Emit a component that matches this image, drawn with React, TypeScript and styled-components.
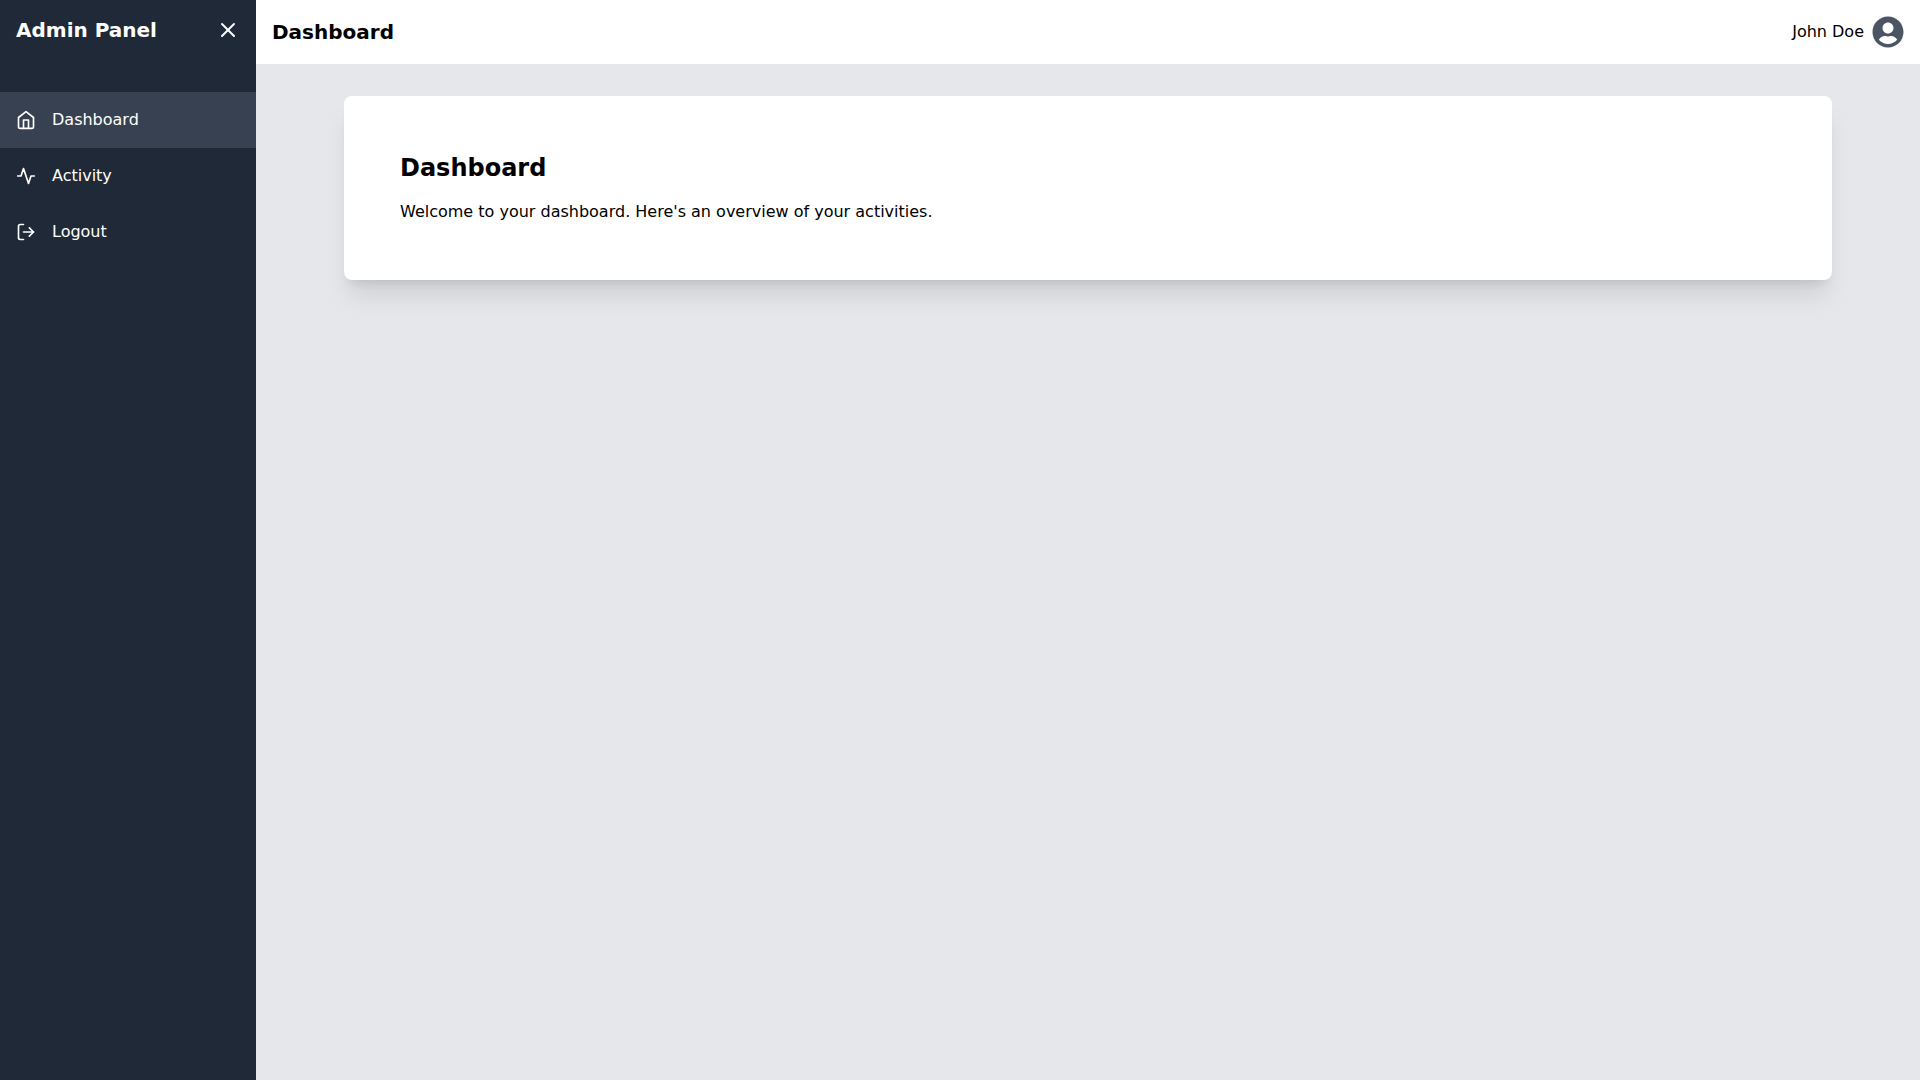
import React, { useState } from "react";
import styled, { createGlobalStyle } from "styled-components";
import { FiActivity, FiHome, FiLogOut, FiX } from "react-icons/fi";
import { FaUserCircle } from "react-icons/fa";

const GlobalStyle = createGlobalStyle`
  *, *::before, *::after { box-sizing: border-box; }
  body {
    margin: 0;
    font-family: "DejaVu Sans", sans-serif;
    font-size: 16px;
    line-height: 24px;
    color: #000;
  }
  h1, h2, p { margin: 0; }
`;

const Layout = styled.div`
  display: flex;
  min-height: 100vh;
  background: #e5e7eb;
`;

const Sidebar = styled.aside`
  flex: 0 0 256px;
  background: #1f2937;
  color: #fff;
`;

const SidebarHeader = styled.div`
  display: flex;
  align-items: center;
  justify-content: space-between;
  padding: 16px;
`;

const Title = styled.h1`
  font-size: 20px;
  line-height: 28px;
  font-weight: 700;
`;

const CloseButton = styled.button`
  display: flex;
  padding: 0;
  border: 0;
  background: none;
  color: inherit;
  font-size: 24px;
  cursor: pointer;
`;

const Nav = styled.nav`
  display: flex;
  flex-direction: column;
  margin-top: 32px;
`;

const NavLink = styled.a<{ $active: boolean }>`
  display: flex;
  align-items: center;
  gap: 16px;
  padding: 16px;
  color: inherit;
  text-decoration: none;
  background: ${({ $active }) => ($active ? "#374151" : "transparent")};

  &:hover { background: #374151; }

  svg { font-size: 20px; }
`;

const Content = styled.div`
  flex: 1;
  min-width: 0;
`;

const TopBar = styled.header`
  display: flex;
  align-items: center;
  justify-content: space-between;
  padding: 16px;
  background: #fff;
`;

const User = styled.div`
  display: flex;
  align-items: center;
  gap: 8px;

  svg {
    font-size: 32px;
    color: #4b5563;
  }
`;

const Main = styled.main`
  padding: 32px 88px;
`;

const Card = styled.section`
  padding: 56px;
  border-radius: 8px;
  background: #fff;
  box-shadow: 0 20px 25px -5px rgba(0, 0, 0, 0.1), 0 8px 10px -6px rgba(0, 0, 0, 0.1);
`;

const CardTitle = styled.h2`
  margin-bottom: 16px;
  font-size: 24px;
  line-height: 32px;
  font-weight: 700;
`;

const links = [
  { label: "Dashboard", Icon: FiHome },
  { label: "Activity", Icon: FiActivity },
  { label: "Logout", Icon: FiLogOut },
];

export default function App() {
  const [active, setActive] = useState("Dashboard");
  return (
    <>
      <GlobalStyle />
      <Layout>
        <Sidebar>
          <SidebarHeader>
            <Title as="div">Admin Panel</Title>
            <CloseButton type="button" aria-label="Close menu">
              <FiX />
            </CloseButton>
          </SidebarHeader>
          <Nav>
            {links.map(({ label, Icon }) => (
              <NavLink
                key={label}
                href={`#${label.toLowerCase()}`}
                $active={label === active}
                onClick={() => setActive(label)}
              >
                <Icon aria-hidden />
                {label}
              </NavLink>
            ))}
          </Nav>
        </Sidebar>
        <Content>
          <TopBar>
            <Title>Dashboard</Title>
            <User>
              <span>John Doe</span>
              <FaUserCircle aria-hidden />
            </User>
          </TopBar>
          <Main>
            <Card>
              <CardTitle>Dashboard</CardTitle>
              <p>Welcome to your dashboard. Here's an overview of your activities.</p>
            </Card>
          </Main>
        </Content>
      </Layout>
    </>
  );
}
